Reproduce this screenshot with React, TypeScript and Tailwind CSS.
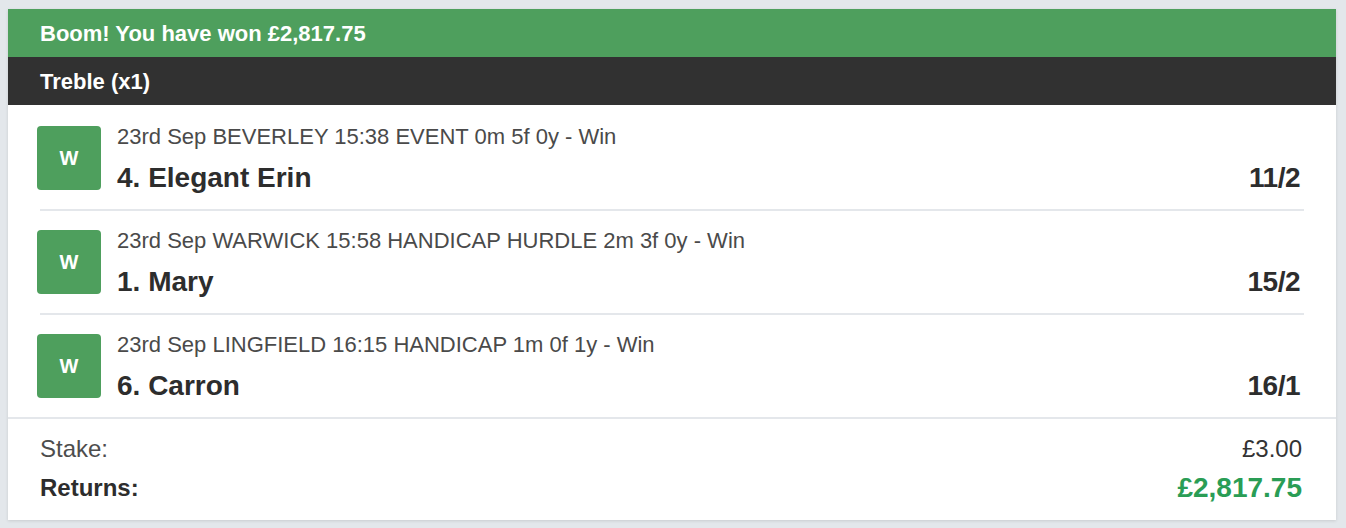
const legs = [
  { meta: '23rd Sep BEVERLEY 15:38 EVENT 0m 5f 0y - Win', name: '4. Elegant Erin', odds: '11/2' },
  { meta: '23rd Sep WARWICK 15:58 HANDICAP HURDLE 2m 3f 0y - Win', name: '1. Mary', odds: '15/2' },
  { meta: '23rd Sep LINGFIELD 16:15 HANDICAP 1m 0f 1y - Win', name: '6. Carron', odds: '16/1' },
]

// ── Leg row ───────────────────────────────────────────────────────────────────

function Leg({ meta, name, odds, last }: { meta: string; name: string; odds: string; last: boolean }) {
  return (
    <div>
      <div className="flex items-start py-[19px]">
        <div className="-ml-[3px] w-16 h-16 shrink-0 rounded-[4px] bg-[#4e9f5d] flex items-center justify-center text-white text-[20px] font-bold">
          W
        </div>
        <div className="flex-1 min-w-0 ml-4 h-16 pr-[4px]">
          <p className="text-[22px] leading-[22px] text-[#4a4a4a]">{meta}</p>
          <div className="mt-[18px] flex items-center justify-between text-[28px] leading-[24px] font-bold text-[#2d2d2d]">
            <span>{name}</span>
            <span className="tracking-[-0.5px]">{odds}</span>
          </div>
        </div>
      </div>
      {!last && <div className="h-[2px] bg-[#e4e7eb]" />}
    </div>
  )
}

// ── Page ──────────────────────────────────────────────────────────────────────

export default function App() {
  return (
    <div
      className="w-[1346px] h-[528px] bg-[#e3e7eb] pt-[9px] pl-2 pr-[10px]"
      style={{ fontFamily: '"Liberation Sans", Arial, sans-serif' }}
    >
      <div className="bg-white shadow-[0_1px_3px_rgba(0,0,0,0.12)]">
        <div className="h-12 bg-[#4e9f5d] px-8 flex items-center text-white text-[22px] font-bold">
          Boom! You have won £2,817.75
        </div>
        <div className="h-12 bg-[#313131] px-8 flex items-center text-white text-[22px] font-bold">
          Treble (x1)
        </div>

        <div className="px-8 pt-[2px]">
          {legs.map((l, i) => (
            <Leg key={l.name} {...l} last={i === legs.length - 1} />
          ))}
        </div>

        {/* Totals */}
        <div className="border-t-2 border-[#e4e7eb] pl-8 pr-[34px] pt-[14px] pb-[16px]">
          <div className="h-8 flex items-center justify-between text-[24px]">
            <span className="text-[#4d4d4d]">Stake:</span>
            <span className="text-[#333333]">£3.00</span>
          </div>
          <div className="mt-[7px] h-8 flex items-center justify-between">
            <span className="text-[24px] font-bold text-[#2d2d2d]">Returns:</span>
            <span className="text-[28px] font-bold text-[#2a9d55]">£2,817.75</span>
          </div>
        </div>
      </div>
    </div>
  )
}
